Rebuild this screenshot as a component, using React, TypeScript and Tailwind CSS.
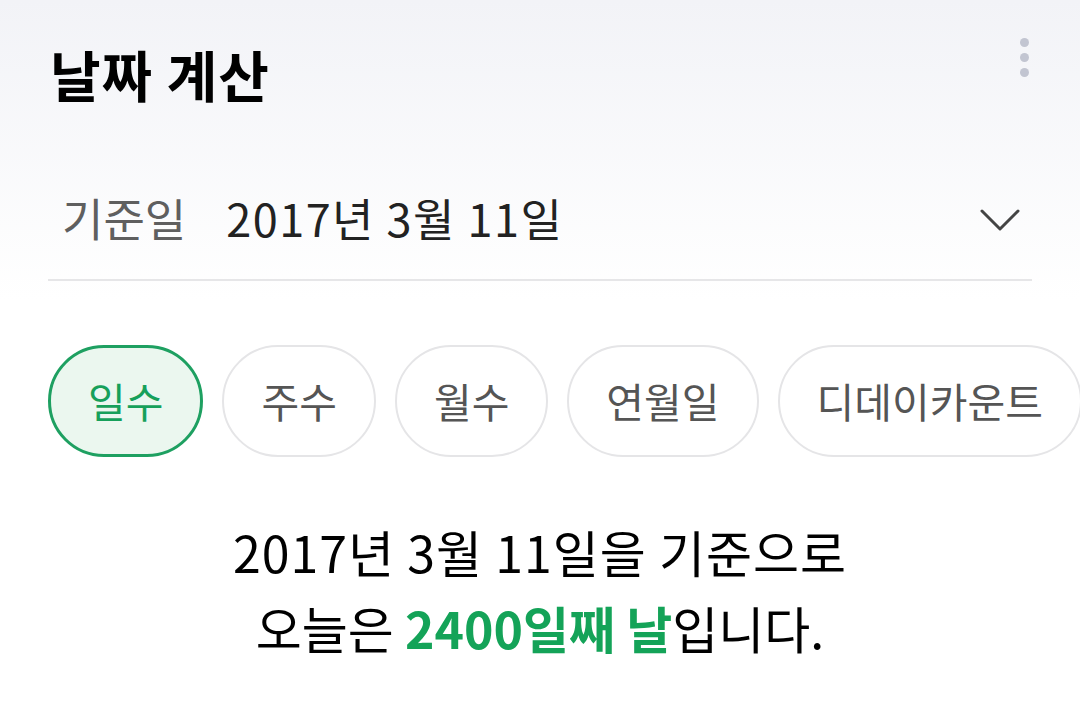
import React, { useState } from 'react';

const font = "font-['Noto_Sans_CJK_KR','Noto_Sans',sans-serif]";

const tabs = ['일수', '주수', '월수', '연월일', '디데이카운트'];

const App = () => {
    const [active, setActive] = useState(0);

    return (
        <div className={`w-[1080px] h-[709px] overflow-hidden bg-white ${font}`}>
            <div className="bg-gradient-to-b from-[#f2f3f7] to-white h-[300px] px-12">
                <div className="flex justify-between pt-[30px]">
                    <h1 className="text-[55px] font-bold text-black leading-none tracking-[1px] mt-[16px] ml-[2px]">날짜 계산</h1>
                    <button className="flex flex-col items-center gap-[6px] mt-[8px] mr-[3px] w-[10px]">
                        <span className="w-[9px] h-[9px] rounded-full bg-[#c2c5d1]" />
                        <span className="w-[9px] h-[9px] rounded-full bg-[#c2c5d1]" />
                        <span className="w-[9px] h-[9px] rounded-full bg-[#c2c5d1]" />
                    </button>
                </div>

                <div className="flex items-center justify-between mt-[78px] h-[102px] border-b-2 border-[#e6e6e8] pb-[24px]">
                    <div className="flex items-center text-[45px] leading-none">
                        <span className="text-[#5f5f5f] ml-[14px]">기준일</span>
                        <span className="text-[#222] ml-[40px] tracking-[1.5px]">2017년 3월 11일</span>
                    </div>
                    <svg width="40" height="24" viewBox="0 0 40 24" fill="none" className="mr-[12px] mt-[6px]">
                        <path d="M2 3 L20 21 L38 3" stroke="#444" strokeWidth="3" strokeLinecap="round" strokeLinejoin="round" />
                    </svg>
                </div>
            </div>

            <div className="flex gap-[19px] pl-12 mt-[45px] whitespace-nowrap">
                {tabs.map((t, i) => (
                    <button
                        key={t}
                        onClick={() => setActive(i)}
                        className={
                            i === active
                                ? 'h-[112px] px-[37px] shrink-0 rounded-full border-[3px] border-[#1ea061] bg-[#ebf7ef] text-[#16a05a] text-[41px]'
                                : 'h-[112px] px-[37px] shrink-0 rounded-full border-2 border-[#e5e5e7] bg-white text-[#555] text-[41px]'
                        }
                    >
                        {t}
                    </button>
                ))}
            </div>

            <div className="mt-[56px] text-center text-[50px] leading-[76px] text-black">
                <p className="tracking-[1px]">2017년 3월 11일을 기준으로</p>
                <p>
                    오늘은 <span className="font-bold text-[#14a358]">2400일째 날</span>입니다.
                </p>
            </div>
        </div>
    );
};

export default App;
